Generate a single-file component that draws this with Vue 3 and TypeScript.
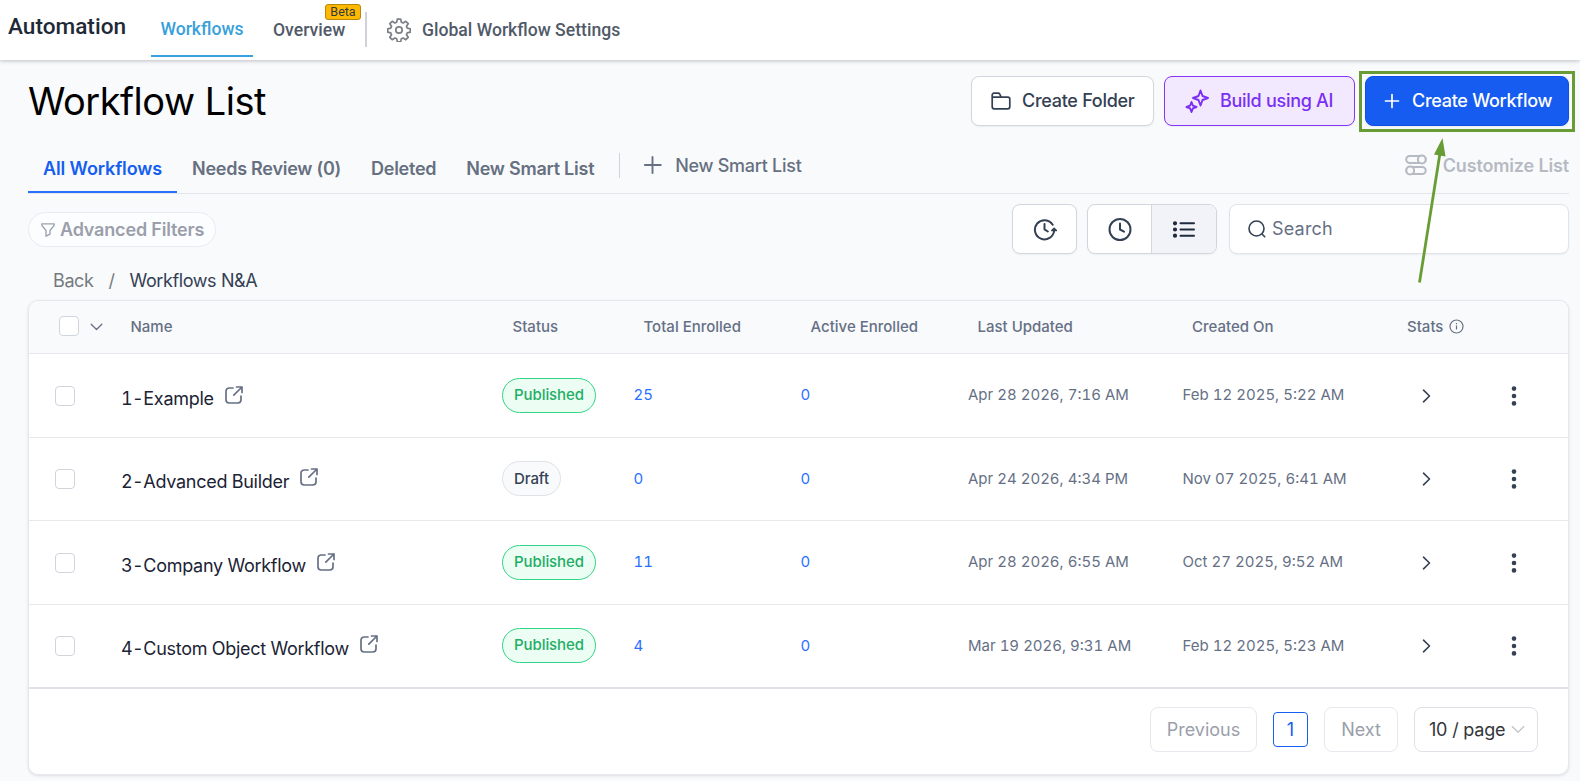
<script setup lang="ts">
interface Workflow {
  no: number
  name: string
  status: 'Published' | 'Draft'
  total: number
  active: number
  updated: string
  created: string
}

const workflows: Workflow[] = [
  { no: 1, name: 'Example', status: 'Published', total: 25, active: 0, updated: 'Apr 28 2026, 7:16 AM', created: 'Feb 12 2025, 5:22 AM' },
  { no: 2, name: 'Advanced Builder', status: 'Draft', total: 0, active: 0, updated: 'Apr 24 2026, 4:34 PM', created: 'Nov 07 2025, 6:41 AM' },
  { no: 3, name: 'Company Workflow', status: 'Published', total: 11, active: 0, updated: 'Apr 28 2026, 6:55 AM', created: 'Oct 27 2025, 9:52 AM' },
  { no: 4, name: 'Custom Object Workflow', status: 'Published', total: 4, active: 0, updated: 'Mar 19 2026, 9:31 AM', created: 'Feb 12 2025, 5:23 AM' },
]
</script>

<template>
  <div class="app">
    <header class="topbar">
      <div class="brand">Automation</div>
      <a class="nav nav-active">Workflows</a>
      <a class="nav nav-overview">Overview<span class="beta">Beta</span></a>
      <i class="nav-divider"></i>
      <svg class="gear" viewBox="0 0 24 24" fill="none" stroke="#7c7f86" stroke-width="1.700" stroke-linejoin="round">
        <path d="M10.300 1.200h3.400l.6 3 1.900.8 2.600-1.700 2.400 2.400-1.700 2.600.8 1.900 3 .6v3.400l-3 .6-.8 1.900 1.700 2.600-2.400 2.400-2.600-1.700-1.900.8-.6 3h-3.400l-.6-3-1.900-.8-2.600 1.700-2.400-2.400 1.700-2.600-.8-1.900-3-.6v-3.400l3-.6.8-1.900-1.700-2.600 2.400-2.400L7.800 5l1.900-.8z" />
        <circle cx="12" cy="12" r="3.200" />
      </svg>
      <a class="nav nav-settings">Global Workflow Settings</a>
    </header>

    <main class="content">
      <div class="title-row">
        <h1>Workflow List</h1>
        <div class="actions">
          <button class="btn folder">
            <svg width="20" height="18" viewBox="0 0 20 18" fill="none" stroke="#344054" stroke-width="1.700" stroke-linejoin="round" stroke-linecap="round">
              <path d="M1.200 5.200V3a1.800 1.800 0 0 1 1.800-1.800h4.300c.6 0 1.100.3 1.400.8l1.500 3.200M1.200 5.200h15.600a2 2 0 0 1 2 2v7.600a2 2 0 0 1-2 2H3.200a2 2 0 0 1-2-2z" />
            </svg>
            <span>Create Folder</span>
          </button>
          <button class="btn ai">
            <svg width="24" height="24" viewBox="0 0 24 24" fill="none" stroke="#7a2ff5" stroke-width="1.900" stroke-linejoin="round">
              <path d="M15.500 1.500l2 5.500 5.500 2-5.500 2-2 5.500-2-5.500-5.500-2 5.500-2z" />
              <path d="M6.500 13l1.400 3.600 3.600 1.400-3.600 1.400L6.500 23l-1.400-3.600L1.500 18l3.600-1.400z" />
            </svg>
            <span>Build using AI</span>
          </button>
          <button class="btn primary">
            <svg width="16" height="16" viewBox="0 0 16 16" fill="none" stroke="#fff" stroke-width="1.700" stroke-linecap="round"><path d="M8 1.500v13M1.500 8h13" /></svg>
            <span>Create Workflow</span>
          </button>
          <div class="highlight"></div>
          <svg class="arrow" width="40" height="150" viewBox="0 0 40 150">
            <path d="M8.500 145.500L29 16" stroke="#679d34" stroke-width="2.800" />
            <path d="M31.500 1L23 17.500 34.500 19.500z" fill="#679d34" />
          </svg>
        </div>
      </div>

      <div class="tabs">
        <a class="tab tab-on">All Workflows</a>
        <a class="tab">Needs Review (0)</a>
        <a class="tab">Deleted</a>
        <a class="tab">New Smart List</a>
        <i class="tab-divider"></i>
        <a class="new-list">
          <svg width="18" height="18" viewBox="0 0 18 18" stroke="#667085" stroke-width="1.900" stroke-linecap="round"><path d="M8.500 1v16M.8 9h16" /></svg>
          <span>New Smart List</span>
        </a>
        <a class="customize">
          <svg width="22" height="22" viewBox="0 0 22 22" fill="none" stroke="#b6bac3" stroke-width="2">
            <rect x="1.200" y="2" width="19.500" height="7" rx="3.500" /><circle cx="16.800" cy="5.500" r="3.900" fill="#f9fafc" />
            <rect x="1.200" y="13" width="19.500" height="7" rx="3.500" /><circle cx="5.200" cy="16.500" r="3.900" fill="#f9fafc" />
          </svg>
          <span>Customize List</span>
        </a>
      </div>

      <div class="tools">
        <button class="filters">
          <svg width="14" height="14" viewBox="0 0 14 14" fill="none" stroke="#9a9fab" stroke-width="1.300" stroke-linejoin="round"><path d="M.8.800h12.400v1.500L9 7.500v3.700l-4 2V7.500L.8 2.300z" /></svg>
          <span>Advanced Filters</span>
        </button>
        <div class="tools-right">
          <button class="icon-btn">
            <svg width="24" height="24" viewBox="0 0 24 24" fill="none" stroke="#344054" stroke-width="2" stroke-linecap="round" stroke-linejoin="round">
              <path d="M19.700 7.700A9.600 9.600 0 1 0 21.100 13.500M11.500 7v5.300l3.300 2.200" />
              <path d="M18.700 13.600l2.400-2.300 2.400 2.300z" fill="#344054" stroke-width="1.400" />
            </svg>
          </button>
          <div class="toggle">
            <button class="toggle-item">
              <svg width="24" height="24" viewBox="0 0 24 24" fill="none" stroke="#344054" stroke-width="2" stroke-linecap="round" stroke-linejoin="round"><circle cx="12" cy="12.500" r="10.500" /><path d="M12 6.500v6l4 2.200" /></svg>
            </button>
            <button class="toggle-item toggle-on">
              <svg width="24" height="24" viewBox="0 0 24 24" fill="none" stroke="#1f2a3d" stroke-width="2" stroke-linecap="round">
                <path d="M8.500 6.300H22M8.500 12.500H22M8.500 18.700H22" />
                <path d="M3 6.300h.01M3 12.500h.01M3 18.700h.01" stroke-width="4.200" />
              </svg>
            </button>
          </div>
          <div class="search">
            <svg width="18" height="18" viewBox="0 0 18 18" fill="none" stroke="#344054" stroke-width="1.600" stroke-linecap="round"><circle cx="8.500" cy="8.500" r="7.500" /><path d="M14 14l2.700 2.700" /></svg>
            <span>Search</span>
          </div>
        </div>
      </div>

      <nav class="crumbs"><span>Back</span><span class="slash">/</span><span class="here">Workflows N&amp;A</span></nav>

      <section class="table">
        <div class="row head">
          <div class="cell head-check">
            <i class="box"></i>
            <svg width="13" height="8" viewBox="0 0 13 8" fill="none" stroke="#667085" stroke-width="1.300" stroke-linecap="round" stroke-linejoin="round"><path d="M1.200 1.200l5.300 5.300 5.300-5.300" /></svg>
          </div>
          <div class="cell">Name</div>
          <div class="cell">Status</div>
          <div class="cell">Total Enrolled</div>
          <div class="cell">Active Enrolled</div>
          <div class="cell">Last Updated</div>
          <div class="cell">Created On</div>
          <div class="cell">
            Stats
            <svg class="info" width="15" height="15" viewBox="0 0 15 15" fill="none" stroke="#667085" stroke-width="1.200"><circle cx="7.500" cy="7.500" r="6.500" /><path d="M7.500 6.500v4M7.500 4v1.200" /></svg>
          </div>
          <div class="cell"></div>
        </div>

        <div v-for="w in workflows" :key="w.no" class="row item">
          <div class="cell check"><i class="box"></i></div>
          <div class="cell name">
            <span class="no">{{ w.no }}</span><span>-{{ w.name }}</span>
            <svg width="18" height="18" viewBox="0 0 18 18" fill="none" stroke="#667085" stroke-width="1.700" stroke-linecap="round" stroke-linejoin="round">
              <path d="M8 2H4.200A3.200 3.200 0 0 0 1 5.200v8.600A3.200 3.200 0 0 0 4.200 17h8.600a3.200 3.200 0 0 0 3.200-3.200V10M11.500 1H17v5.500M17 1L8.800 9.200" />
            </svg>
          </div>
          <div class="cell state"><span class="pill" :class="w.status.toLowerCase()">{{ w.status }}</span></div>
          <div class="cell count">{{ w.total }}</div>
          <div class="cell count">{{ w.active }}</div>
          <div class="cell date">{{ w.updated }}</div>
          <div class="cell date">{{ w.created }}</div>
          <div class="cell go">
            <svg width="10" height="14" viewBox="0 0 10 14" fill="none" stroke="#344054" stroke-width="1.600" stroke-linecap="round" stroke-linejoin="round"><path d="M1.500 1.200l6 5.800-6 5.800" /></svg>
          </div>
          <div class="cell more">
            <svg width="6" height="20" viewBox="0 0 6 20" fill="#344054"><circle cx="3" cy="2.600" r="2.300" /><circle cx="3" cy="10" r="2.300" /><circle cx="3" cy="17.400" r="2.300" /></svg>
          </div>
        </div>

        <footer class="pager">
          <button class="page-btn prev"><span>Previous</span></button>
          <button class="page-num"><span>1</span></button>
          <button class="page-btn next"><span>Next</span></button>
          <button class="page-size">
            <span>10 / page</span>
            <svg width="14" height="9" viewBox="0 0 14 9" fill="none" stroke="#c2c4ca" stroke-width="1.300" stroke-linecap="round" stroke-linejoin="round"><path d="M1.200 1.500L7 7.300l5.800-5.800" /></svg>
          </button>
        </footer>
      </section>
    </main>
  </div>
</template>

<style>
body { margin: 0; background: #f9fafc; }
</style>

<style scoped>
.app {
  width: 1580px;
  height: 781px;
  overflow: hidden;
  background: #f9fafc;
  font-family: Inter, "Liberation Sans", sans-serif;
  color: #667085;
  white-space: nowrap;
}
.app * { box-sizing: border-box; }
.app svg { display: block; flex: none; }
button { font: inherit; letter-spacing: inherit; margin: 0; padding: 0; background: none; border: 0; color: inherit; display: flex; align-items: center; }

.topbar {
  height: 60px;
  background: #fff;
  box-shadow: 0 1px 4px rgba(30, 40, 50, 0.28);
  display: flex;
  align-items: flex-start;
  padding-left: 8px;
  font-family: Roboto, sans-serif;
  font-weight: 500;
}
.brand { width: 143px; font-size: 22.600px; line-height: 28px; padding-top: 13px; color: #1f2937; }
.nav { font-size: 17.600px; line-height: 22px; color: #515a69; }
.nav-active { width: 102px; height: 57px; padding-top: 18px; text-align: center; color: #38a0db; border-bottom: 2px solid #38a0db; }
.nav-overview { position: relative; width: 92px; margin-left: 20px; padding-top: 19px; }
.beta {
  position: absolute;
  left: 52px;
  top: 4px;
  width: 36px;
  height: 16px;
  border: 1px solid #b8860b;
  border-radius: 3px;
  background: #ffb800;
  color: #333a3f;
  font-size: 12.500px;
  font-weight: 400;
  line-height: 14px;
  text-align: center;
}
.nav-divider { width: 2px; height: 35px; margin-top: 12px; background: #d0d2d8; }
.gear { width: 24px; height: 24px; margin: 18px 11px 0 20px; }
.nav-settings { padding-top: 19px; }

.content { padding: 16px 11px 0 28px; }
.title-row { display: flex; justify-content: space-between; height: 50px; }
h1 { margin: 0; font-size: 38px; line-height: 50px; font-weight: 400; color: #000; letter-spacing: -0.500px; }
.actions { position: relative; display: flex; font-size: 18px; font-weight: 500; letter-spacing: -0.280px; }
.btn { height: 50px; border: 1px solid #d3d6dd; border-radius: 8px; box-shadow: 0 1px 2px rgba(16, 24, 40, 0.06); padding-left: 20px; }
.btn span { margin-top: -2px; }
.folder { width: 183px; margin-right: 10px; background: #fff; color: #344054; }
.folder svg { margin-right: 11px; margin-left: -1px; }
.ai { width: 191px; margin-right: 10px; background: #f2e9fe; border-color: #8436f5; color: #7a2ff5; }
.ai svg { margin-right: 11px; }
.primary { width: 204px; background: #165cf0; border-color: #0c50e4; color: #fff; }
.primary svg { margin-left: -2px; margin-right: 12px; }
.highlight { position: absolute; right: -6px; top: -5px; width: 216px; height: 61px; border: 3px solid #679d34; }
.arrow { position: absolute; right: 118px; top: 61px; z-index: 2; }

.tabs { display: flex; height: 68px; border-bottom: 1px solid #e3e6eb; font-size: 18px; font-weight: 600; color: #667080; letter-spacing: -0.250px; }
.tab { height: 67px; padding: 32px 15px 0; line-height: 22px; }
.tab-on { color: #155eef; border-bottom: 2px solid #2970ff; letter-spacing: -0.120px; }
.tab-divider { width: 1px; height: 25px; margin: 27px 24px 0 10px; background: #cfd2d8; }
.new-list { display: flex; align-items: center; height: 22px; margin-top: 28px; gap: 13px; font-weight: 500; letter-spacing: -0.280px; }
.customize { display: flex; align-items: center; height: 22px; margin-top: 28px; margin-left: auto; gap: 16px; color: #b6bac3; letter-spacing: -0.150px; }

.tools { display: flex; justify-content: space-between; margin-top: 10px; height: 50px; }
.filters { height: 35px; margin-top: 8px; width: 188px; padding-left: 12px; gap: 5px; border: 1px solid #e9ebef; border-radius: 18px; background: #fcfdfe; color: #9a9fab; font-size: 18px; font-weight: 600; letter-spacing: -0.170px; }
.tools-right { display: flex; }
.icon-btn, .toggle, .search { height: 50px; border: 1px solid #d3d6dd; border-radius: 8px; background: #fff; box-shadow: 0 1px 2px rgba(16, 24, 40, 0.05); }
.icon-btn { width: 65px; margin-right: 10px; justify-content: center; }
.toggle { display: flex; width: 130px; margin-right: 12px; overflow: hidden; }
.toggle-item { width: 63px; justify-content: center; }
.toggle-on { width: 65px; border-left: 1px solid #d3d6dd; background: #f2f3f8; }
.search { display: flex; align-items: center; width: 340px; padding-left: 18px; gap: 6px; border-color: #e0e3e8; font-size: 18px; letter-spacing: 0.200px; }
.search span { margin-top: -2px; }

.crumbs { display: flex; height: 46px; padding-left: 25px; font-size: 18px; line-height: 22px; padding-top: 16px; color: #757a80; letter-spacing: -0.400px; }
.slash { margin: 0 15px; }
.here { color: #344054; }

.table { height: 475px; border: 1px solid #e6e8ec; border-radius: 10px; background: #fff; box-shadow: 0 1px 3px rgba(16, 24, 40, 0.12); overflow: hidden; }
.row { display: grid; grid-template-columns: 92px 381px 131.500px 167px 167.500px 214.500px 239px 76px 1fr; }
.cell { display: flex; align-items: center; }
.head { height: 53px; padding-left: 10px; border-bottom: 1px solid #e6e8ec; background: #f9fafc; font-size: 15px; font-weight: 500; }
.head { grid-template-columns: 91.500px 382px 131px 167px 167px 214.500px 215px 100px 1fr; padding-bottom: 1px; }
.head-check { padding-left: 20px; gap: 11px; }
.head-check .box { margin-top: -1px; }
.box { width: 20px; height: 20px; border: 1px solid #d0d5dd; border-radius: 4px; background: #fff; }
.info { margin-left: 6px; }
.item { height: 84px; border-bottom: 1px solid #e6e8ec; font-size: 15px; font-variant-numeric: tabular-nums; }
.item:nth-child(3) { height: 83px; }
.item:nth-child(5) { border-bottom: 2px solid #dfe1e6; }
.item .box { margin: 1px 0 0 26px; }
.name { font-size: 18px; color: #1b2334; padding-top: 6px; letter-spacing: -0.280px; }
.no { margin-right: -0.500px; }
.name svg { margin: -8px 0 0 11px; }
.pill { height: 35px; border-radius: 18px; padding: 0 11px; line-height: 32px; font-weight: 500; letter-spacing: -0.080px; }
.published { border: 1px solid #32d583; background: #ecfdf3; color: #1fae66; }
.draft { border: 1px solid #dfe1e7; background: #f9fafc; color: #344054; line-height: 33px; }
.count { color: #2970ff; padding-bottom: 2px; }
.date { padding-bottom: 2px; }
.go { padding-top: 1px; }
.more { padding-left: 13.500px; }
.item:nth-child(odd) .check,
.item:nth-child(odd) .state,
.item:nth-child(odd) .name,
.item:nth-child(odd) .go { padding-bottom: 1.500px; }
.item:nth-child(5) .more { padding-bottom: 1px; }

.pager { display: flex; align-items: center; padding: 18px 30px 0 0; justify-content: flex-end; font-size: 18px; }
.pager span { margin-top: -1px; }
.page-btn { height: 45px; border: 1px solid #e6e8ed; border-radius: 8px; justify-content: center; color: #9a9fab; }
.prev { width: 107px; }
.page-num { width: 35px; height: 35px; margin: 0 16px; border: 1px solid #155eef; border-radius: 4px; justify-content: center; color: #155eef; }
.next { width: 74px; margin-right: 16px; }
.page-size { width: 124px; height: 45px; padding-left: 14px; border: 1px solid #dfe1e6; border-radius: 8px; color: #333639; gap: 6px; letter-spacing: -0.200px; }
</style>
